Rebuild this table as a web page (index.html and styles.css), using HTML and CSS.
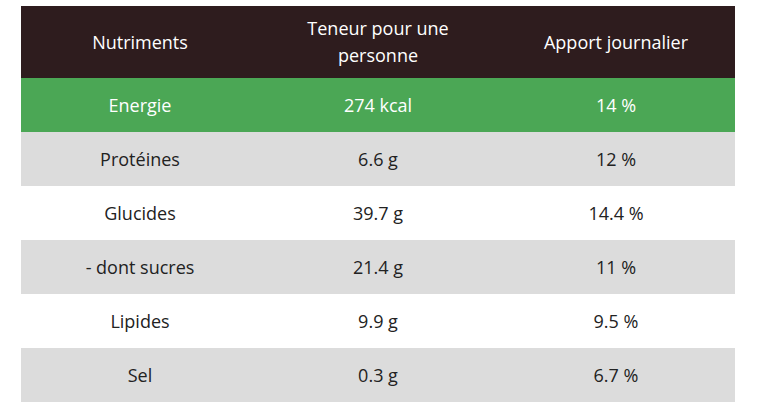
FILE: index.html
```html
<!DOCTYPE html>
<html lang="fr">
<head>
<meta charset="utf-8">
<link rel="stylesheet" href="styles.css">
</head>
<body>
<table class="nutri">
  <thead>
    <tr>
      <th>Nutriments</th>
      <th>Teneur pour une personne</th>
      <th>Apport journalier</th>
    </tr>
  </thead>
  <tbody>
    <tr class="hl"><td>Energie</td><td>274 kcal</td><td>14 %</td></tr>
    <tr class="alt"><td>Protéines</td><td>6.6 g</td><td>12 %</td></tr>
    <tr><td>Glucides</td><td>39.7 g</td><td>14.4 %</td></tr>
    <tr class="alt"><td>- dont sucres</td><td>21.4 g</td><td>11 %</td></tr>
    <tr><td>Lipides</td><td>9.9 g</td><td>9.5 %</td></tr>
    <tr class="alt"><td>Sel</td><td>0.3 g</td><td>6.7 %</td></tr>
  </tbody>
</table>
</body>
</html>
```
FILE: styles.css
```css
html, body {
  margin: 0;
  padding: 0;
  background: #ffffff;
}
body {
  padding: 6px 0 0 21px;
  font-family: "Open Sans", "Noto Sans", sans-serif;
  font-size: 18px;
  color: #222222;
}
.nutri {
  width: 714px;
  border-collapse: collapse;
  table-layout: fixed;
}
.nutri th {
  background: #2e1c1e;
  color: #ffffff;
  font-weight: normal;
  height: 72px;
  padding: 0 40px;
  line-height: 27px;
  text-align: center;
  vertical-align: middle;
  box-sizing: border-box;
}
.nutri td {
  height: 54px;
  padding: 0 10px;
  text-align: center;
  vertical-align: middle;
  box-sizing: border-box;
}
.nutri tr.hl td {
  background: #4ba755;
  color: #ffffff;
}
.nutri tr.alt td {
  background: #dcdcdc;
}
```
